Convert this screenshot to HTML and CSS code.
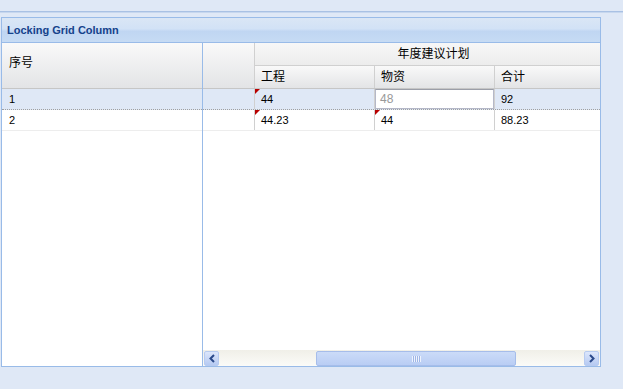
FILE: index.html
```html
<!DOCTYPE html>
<html lang="en">
<head>
<meta charset="UTF-8">
<title>Locking Grid Column</title>
<link rel="stylesheet" href="styles.css">
</head>
<body>

<div class="topbar"></div>

<div class="panel">
  <div class="panel-header">Locking Grid Column</div>
  <div class="panel-body">

    <div class="locked">
      <div class="hd locked-hd"><span>序号</span></div>
      <div class="row selected"><div class="cell num">1</div></div>
      <div class="row lastrow"><div class="cell num">2</div></div>
    </div>

    <div class="unlocked">
      <div class="hd-wrap">
        <div class="hd blank-hd"></div>
        <div class="hd-group">
          <div class="hd group-title">年度建议计划</div>
          <div class="hd-subs">
            <div class="hd sub">工程</div>
            <div class="hd sub">物资</div>
            <div class="hd sub last">合计</div>
          </div>
        </div>
      </div>
      <div class="row selected">
        <div class="cell blank"></div>
        <div class="cell col dirty">44</div>
        <div class="cell col editing"><div class="editor">48</div></div>
        <div class="cell col last">92</div>
      </div>
      <div class="row lastrow">
        <div class="cell blank"></div>
        <div class="cell col dirty">44.23</div>
        <div class="cell col dirty">44</div>
        <div class="cell col last">88.23</div>
      </div>

      <div class="hscroll">
        <div class="sbtn">
          <svg width="8" height="9" viewBox="0 0 8 9"><path d="M6 1 L2.5 4.5 L6 8" fill="none" stroke="#2b4a8b" stroke-width="2"/></svg>
        </div>
        <div class="track">
          <div class="thumb"><span class="grip"></span></div>
        </div>
        <div class="sbtn">
          <svg width="8" height="9" viewBox="0 0 8 9"><path d="M2 1 L5.5 4.5 L2 8" fill="none" stroke="#2b4a8b" stroke-width="2"/></svg>
        </div>
      </div>
    </div>

  </div>
</div>

</body>
</html>
```

FILE: styles.css
```css
body {
  margin: 0;
  background: #dfe8f6;
  font-family: "Liberation Sans", Arial, "Noto Sans CJK SC", sans-serif;
  font-size: 11px;
  color: #000;
}
.topbar {
  height: 11px;
  border-bottom: 1px solid #a9c1e4;
  box-shadow: 0 1px 0 #c7d7ee;
}
.panel {
  margin: 5px 0 0 1px;
  width: 598px;
  border: 1px solid #99bbe8;
}
.panel-header {
  height: 24px;
  line-height: 25px;
  padding-left: 5px;
  border-bottom: 1px solid #99bbe8;
  background: linear-gradient(#dae6f5, #d2e2f6 45%, #c0d6f2 55%, #c6dbf4);
  color: #15428b;
  font-weight: bold;
  font-size: 11px;
}
.panel-body {
  display: flex;
  height: 323px;
  background: #fff;
}
.locked {
  width: 200px;
  flex: none;
  border-right: 1px solid #99bbe8;
}
.unlocked {
  flex: 1;
  min-width: 0;
  display: flex;
  flex-direction: column;
  overflow: hidden;
}
.hd {
  background: linear-gradient(#f9f9f9, #e3e4e6);
  font-family: "Noto Sans CJK SC", sans-serif;
  font-size: 12px;
  box-sizing: border-box;
}
.locked-hd {
  height: 46px;
  border-bottom: 1px solid #c6c6c6;
  padding: 10px 0 0 7px;
}
.hd-wrap {
  display: flex;
  height: 46px;
  border-bottom: 1px solid #c6c6c6;
  box-sizing: border-box;
}
.blank-hd {
  width: 52px;
  flex: none;
  border-right: 1px solid #d0d0d0;
}
.hd-group {
  display: flex;
  flex-direction: column;
  flex: 1;
  min-width: 0;
}
.group-title {
  height: 23px;
  line-height: 20px;
  text-align: center;
  padding-left: 12px;
  border-bottom: 1px solid #d0d0d0;
  background: linear-gradient(#f7f7f7, #ececec);
}
.hd-subs {
  display: flex;
  flex: 1;
}
.sub {
  width: 120px;
  flex: none;
  padding: 1px 0 0 6px;
  border-right: 1px solid #d0d0d0;
  line-height: 18px;
}
.sub.last {
  border-right: none;
  flex: 1;
}
.row {
  display: flex;
  height: 21px;
  border-bottom: 1px dotted #a0a0a0;
  box-sizing: border-box;
}
.row.lastrow {
  border-bottom: 1px solid #ededed;
}
.row.selected {
  background: #dfe8f6;
}
.cell {
  line-height: 20px;
  padding-left: 7px;
  box-sizing: border-box;
  position: relative;
}
.blank {
  width: 52px;
  flex: none;
  padding: 0;
  border-right: 1px solid #d0d0d0;
}
.col {
  width: 120px;
  flex: none;
  border-right: 1px solid #d0d0d0;
  padding-left: 6px;
}
.col.last {
  flex: 1;
  border-right: none;
}
.dirty::before {
  content: "";
  position: absolute;
  left: 0;
  top: 0;
  border-top: 5px solid #b80000;
  border-right: 5px solid transparent;
}
.editing {
  padding: 0;
}
.editor {
  height: 20px;
  background: #fff;
  border: 1px solid #b5b8c8;
  border-top-color: #9b9ea8;
  color: #999;
  padding-left: 4px;
  line-height: 19px;
  font-size: 12px;
  box-sizing: border-box;
}
.hscroll {
  margin-top: auto;
  display: flex;
  height: 16px;
  background: linear-gradient(#f0efe8, #fbfbf8);
}
.sbtn {
  width: 15px;
  height: 15px;
  flex: none;
  margin: 1px 0 0 1px;
  border: 1px solid #b7cbf0;
  border-radius: 2px;
  background: linear-gradient(#dce6fb, #b6caf2);
  display: flex;
  align-items: center;
  justify-content: center;
  box-sizing: border-box;
}
.sbtn:last-child {
  margin: 1px 1px 0 0;
}
.track {
  flex: 1;
  padding: 0 0 0 97px;
}
.thumb {
  width: 200px;
  height: 15px;
  margin-top: 1px;
  border: 1px solid #a6bdea;
  border-radius: 2px;
  background: linear-gradient(#cbdbf8, #b9cdf4);
  box-sizing: border-box;
  display: flex;
  align-items: center;
  justify-content: center;
}
.grip {
  width: 9px;
  height: 6px;
  background: repeating-linear-gradient(90deg, #eef3fd 0 1px, #9fb6e6 1px 2px);
}
```
